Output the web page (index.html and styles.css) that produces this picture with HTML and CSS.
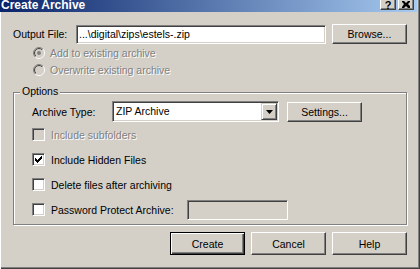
FILE: index.html
```html
<!DOCTYPE html>
<html lang="en">
<head>
    <meta charset="UTF-8">
    <title>Create Archive</title>
    <link rel="stylesheet" href="styles.css">
</head>
<body>
    <div class="window">
        <div class="titlebar">
            <span class="title">Create Archive</span>
            <span class="cap-btn cap-help">?</span>
            <span class="cap-btn cap-close">
                <svg width="8" height="7" viewBox="0 0 8 7"><path d="M0 0h2l2 2 2-2h2v1L6 3l2 2v2H6L4 5 2 7H0V6l2-3-2-2z" fill="#000"/></svg>
            </span>
        </div>

        <div class="content">
            <div class="output-row">
                <span class="output-label">Output File:</span>
                <div class="field output-field">...\digital\zips\estels-.zip</div>
                <button class="btn browse-btn">Browse...</button>
            </div>

            <div class="radios">
                <div class="radio-row disabled">
                    <svg class="radio" width="12" height="12" viewBox="0 0 12 12">
                        <defs>
                            <linearGradient id="outer-ring" x1="0" y1="0" x2="1" y2="1">
                                <stop offset="0.5" stop-color="#808080"/>
                                <stop offset="0.5" stop-color="#ffffff"/>
                            </linearGradient>
                            <linearGradient id="inner-ring" x1="0" y1="0" x2="1" y2="1">
                                <stop offset="0.5" stop-color="#404040"/>
                                <stop offset="0.5" stop-color="#d4d0c8"/>
                            </linearGradient>
                        </defs>
                        <circle cx="6" cy="6" r="5.5" fill="none" stroke="url(#outer-ring)"/>
                        <circle cx="6" cy="6" r="4.5" fill="#d4d0c8" stroke="url(#inner-ring)"/>
                        <circle cx="6" cy="6" r="2" fill="#808080"/>
                    </svg>
                    Add to existing archive
                </div>
                <div class="radio-row disabled">
                    <svg class="radio" width="12" height="12" viewBox="0 0 12 12">
                        <circle cx="6" cy="6" r="5.5" fill="none" stroke="url(#outer-ring)"/>
                        <circle cx="6" cy="6" r="4.5" fill="#d4d0c8" stroke="url(#inner-ring)"/>
                    </svg>
                    Overwrite existing archive
                </div>
            </div>

            <div class="group">
                <div class="legend">Options</div>

                <div class="type-row">
                    <span class="type-label">Archive Type:</span>
                    <div class="field combo">
                        <span class="combo-text">ZIP Archive</span>
                        <span class="combo-btn">
                            <svg width="7" height="4" viewBox="0 0 7 4"><path d="M0 0h7L3.5 4z" fill="#000"/></svg>
                        </span>
                    </div>
                    <button class="btn settings-btn">Settings...</button>
                </div>

                <div class="check-row disabled">
                    <span class="field check off"></span>
                    Include subfolders
                </div>
                <div class="check-row">
                    <span class="field check">
                        <svg width="7" height="7" viewBox="0 0 7 7"><path d="M0 2h1v1h1v1h1V3h1V2h1V1h1V0h1v3H6v1H5v1H4v1H3v1H2V6H1V5H0z" fill="#000"/></svg>
                    </span>
                    Include Hidden Files
                </div>
                <div class="check-row">
                    <span class="field check"></span>
                    Delete files after archiving
                </div>
                <div class="check-row">
                    <span class="field check"></span>
                    <span class="pw-label">Password Protect Archive:</span>
                    <div class="field pw-field off"></div>
                </div>
            </div>

            <div class="actions">
                <button class="btn btn-default">Create</button>
                <button class="btn">Cancel</button>
                <button class="btn">Help</button>
            </div>
        </div>
    </div>
</body>
</html>
```

FILE: styles.css
```css
* {
    box-sizing: border-box;
}

html, body {
    margin: 0;
    padding: 0;
}

body {
    background-color: #d4d0c8;
    font: 10.5px "Liberation Sans", Arial, sans-serif;
    color: #000;
}

.window {
    width: 420px;
    height: 269px;
    background-color: #d4d0c8;
    box-shadow: inset 1px 0 #fff, inset -1px -1px #404040, inset -2px -2px #808080;
    overflow: hidden;
}

/* Title bar, top part is cut off */
.titlebar {
    display: flex;
    align-items: flex-end;
    height: 12px;
    margin-right: 3px;
    padding: 0 3px 2px 1px;
    background: linear-gradient(to right, #0a246a, #a6caf0);
    overflow: hidden;
}

.title {
    flex: 1;
    align-self: flex-start;
    color: #fff;
    font-weight: bold;
    font-size: 12px;
    line-height: 10px;
    white-space: nowrap;
}

.cap-btn {
    flex: none;
    display: flex;
    align-items: flex-start;
    justify-content: center;
    width: 16px;
    height: 14px;
    background-color: #d4d0c8;
    border: 1px solid;
    border-color: #fff #404040 #404040 #fff;
    box-shadow: inset -1px -1px #808080;
}

.cap-help {
    padding-top: 3px;
    font-weight: bold;
    font-size: 11px;
    line-height: 10px;
}

.cap-close {
    margin-left: 2px;
    padding-top: 4px;
}

.content {
    padding: 12px 13px 0 13px;
}

/* Shared widgets */
.field {
    background-color: #fff;
    border: 1px solid;
    border-color: #808080 #fff #fff #808080;
    box-shadow: inset 1px 1px #404040, inset -1px -1px #d4d0c8;
}

.field.off {
    background-color: #d4d0c8;
}

.btn {
    display: flex;
    align-items: center;
    justify-content: center;
    width: 75px;
    height: 20px;
    padding: 0;
    background-color: #d4d0c8;
    border: 1px solid;
    border-color: #fff #404040 #404040 #fff;
    box-shadow: inset -1px -1px #808080;
    font: inherit;
    color: #000;
}

.disabled {
    color: #808080;
    text-shadow: 1px 1px 0 #fff;
}

/* Output file row */
.output-row {
    display: flex;
    align-items: center;
    height: 20px;
}

.output-label {
    width: 63px;
}

.output-field {
    width: 250px;
    height: 19px;
    padding-left: 2px;
    line-height: 17px;
    white-space: nowrap;
    overflow: hidden;
}

.browse-btn {
    margin-left: 6px;
}

.radios {
    padding-left: 20px;
}

.radio-row {
    display: flex;
    align-items: center;
    height: 17px;
}

.radio {
    flex: none;
    margin-right: 5px;
}

/* Options group box */
.group {
    margin-top: 14px;
    padding-bottom: 2px;
    border: 1px solid #808080;
    box-shadow: inset 1px 1px #fff, 1px 1px #fff;
}

.legend {
    width: fit-content;
    margin: -8px 0 0 6px;
    padding: 0 2px;
    line-height: 13px;
    background-color: #d4d0c8;
}

.type-row {
    display: flex;
    align-items: center;
    height: 21px;
    margin-top: 3px;
    padding-left: 18px;
}

.type-label {
    width: 80px;
}

.combo {
    display: flex;
    width: 167px;
    height: 21px;
    padding: 1px;
}

.combo-text {
    flex: 1;
    padding-left: 2px;
    line-height: 17px;
}

.combo-btn {
    display: flex;
    align-items: center;
    justify-content: center;
    width: 16px;
    height: 17px;
    background-color: #d4d0c8;
    border: 1px solid;
    border-color: #d4d0c8 #404040 #404040 #d4d0c8;
    box-shadow: inset 1px 1px #fff, inset -1px -1px #808080;
}

.settings-btn {
    margin-left: 8px;
}

.check-row {
    display: flex;
    align-items: center;
    height: 25px;
    padding-left: 18px;
}

.check {
    flex: none;
    display: flex;
    align-items: center;
    justify-content: center;
    width: 13px;
    height: 13px;
    margin-right: 6px;
}

.pw-label {
    width: 136px;
}

.pw-field {
    width: 101px;
    height: 20px;
}

/* Bottom buttons */
.actions {
    display: flex;
    justify-content: flex-end;
    gap: 6px;
    margin-top: 7px;
}

.actions .btn {
    height: 23px;
}

.btn-default {
    border-color: #000;
    box-shadow: inset 1px 1px #fff, inset -1px -1px #404040, inset -2px -2px #808080;
}
```
